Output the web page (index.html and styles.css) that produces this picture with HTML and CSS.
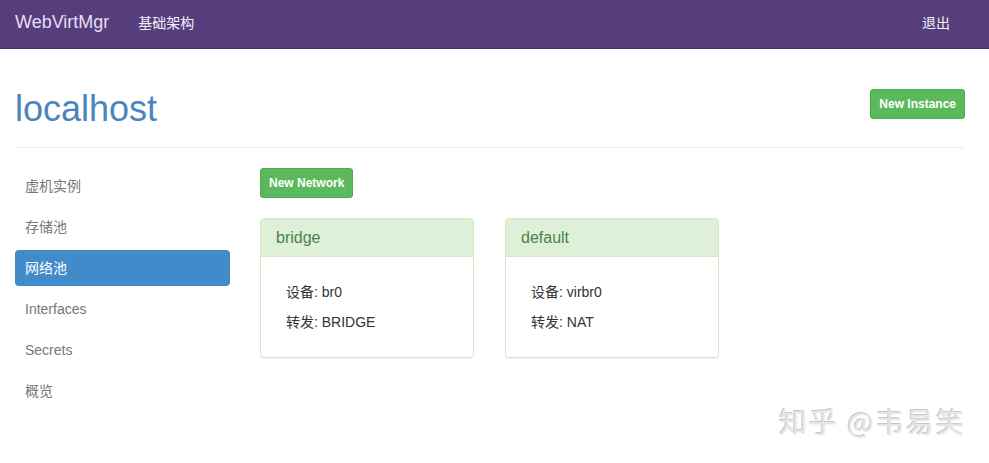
FILE: index.html
```html
<!DOCTYPE html>
<html>
<head>
<meta charset="utf-8">
<link rel="stylesheet" href="styles.css">
</head>
<body>
<nav class="navbar">
  <div class="nav-left">
    <span class="brand">WebVirtMgr</span>
    <span class="nav-link">基础架构</span>
  </div>
  <span class="nav-link logout">退出</span>
</nav>
<div class="container">
  <div class="page-header">
    <h1>localhost</h1>
    <button class="btn">New Instance</button>
  </div>
  <div class="row">
    <ul class="sidebar">
      <li>虚机实例</li>
      <li>存储池</li>
      <li class="active">网络池</li>
      <li>Interfaces</li>
      <li>Secrets</li>
      <li>概览</li>
    </ul>
    <div class="main">
      <div class="toolbar"><button class="btn">New Network</button></div>
      <div class="panels">
        <div class="panel">
          <div class="panel-heading">bridge</div>
          <div class="panel-body">
            <p>设备: br0</p>
            <p>转发: BRIDGE</p>
          </div>
        </div>
        <div class="panel">
          <div class="panel-heading">default</div>
          <div class="panel-body">
            <p>设备: virbr0</p>
            <p>转发: NAT</p>
          </div>
        </div>
      </div>
    </div>
  </div>
</div>
<div class="watermark">知乎 @韦易笑</div>
</body>
</html>
```
FILE: styles.css
```css
* { box-sizing: border-box; }
html, body { margin: 0; padding: 0; }
body {
  font-family: "Liberation Sans", Arial, "Noto Sans CJK SC", sans-serif;
  font-size: 14px;
  color: #333;
  background: #fff;
  width: 989px;
  height: 463px;
  overflow: hidden;
  position: relative;
}
.navbar {
  height: 49px;
  background: #563d7c;
  border-bottom: 1px solid #463165;
  display: flex;
  align-items: center;
  justify-content: space-between;
  padding: 0 39px 0 15px;
}
.nav-left { display: flex; align-items: center; }
.brand {
  font-size: 18px;
  color: #e8def5;
  margin-right: 29px;
  position: relative;
  top: -2px;
}
.nav-link {
  color: #f3eefa;
  font-size: 14px;
  position: relative;
  top: -2px;
}
.container { padding: 0 24px 0 15px; }
.page-header {
  display: flex;
  justify-content: space-between;
  align-items: flex-start;
  border-bottom: 1px solid #eee;
  padding-top: 40px;
  height: 99px;
}
h1 {
  margin: 0;
  font-size: 36px;
  font-weight: normal;
  color: #4a86bd;
  line-height: 40px;
}
.btn {
  font-family: "Liberation Sans", Arial, sans-serif;
  font-size: 12px;
  font-weight: bold;
  color: #fff;
  background: #5cb85c;
  border: 1px solid #4cae4c;
  border-radius: 3px;
  height: 30px;
  padding: 0 8px;
  white-space: nowrap;
  cursor: pointer;
}
.row { display: flex; padding-top: 20px; }
.sidebar {
  list-style: none;
  margin: 0;
  padding: 0;
  width: 215px;
  display: flex;
  flex-direction: column;
  gap: 5px;
}
.sidebar li {
  height: 36px;
  line-height: 36px;
  padding: 0 10px;
  color: #777;
  border-radius: 4px;
}
.sidebar li.active { background: #428bca; color: #fff; }
.main { margin-left: 30px; flex: 1; }
.toolbar { height: 50px; }
.panels { display: flex; gap: 31px; }
.panel {
  width: 214px;
  border: 1px solid #d6e9c6;
  border-radius: 4px;
  box-shadow: 0 1px 1px rgba(0,0,0,.05);
}
.panel-heading {
  background: #dff0d8;
  color: #4a834a;
  font-size: 16px;
  height: 38px;
  line-height: 37px;
  padding: 0 15px;
  border-bottom: 1px solid #d6e9c6;
  border-radius: 3px 3px 0 0;
}
.panel-body { padding: 20px 25px 20px 25px; }
.panel-body p { margin: 0; line-height: 30px; }
.watermark {
  position: absolute;
  left: 779px;
  top: 401px;
  font-family: "Noto Sans CJK SC", sans-serif;
  font-size: 28px;
  color: #e6e6e6;
  text-shadow: -1px -1px 0 #c8c8c8, 1px 1px 0 #fafafa;
  letter-spacing: 2px;
}
```
